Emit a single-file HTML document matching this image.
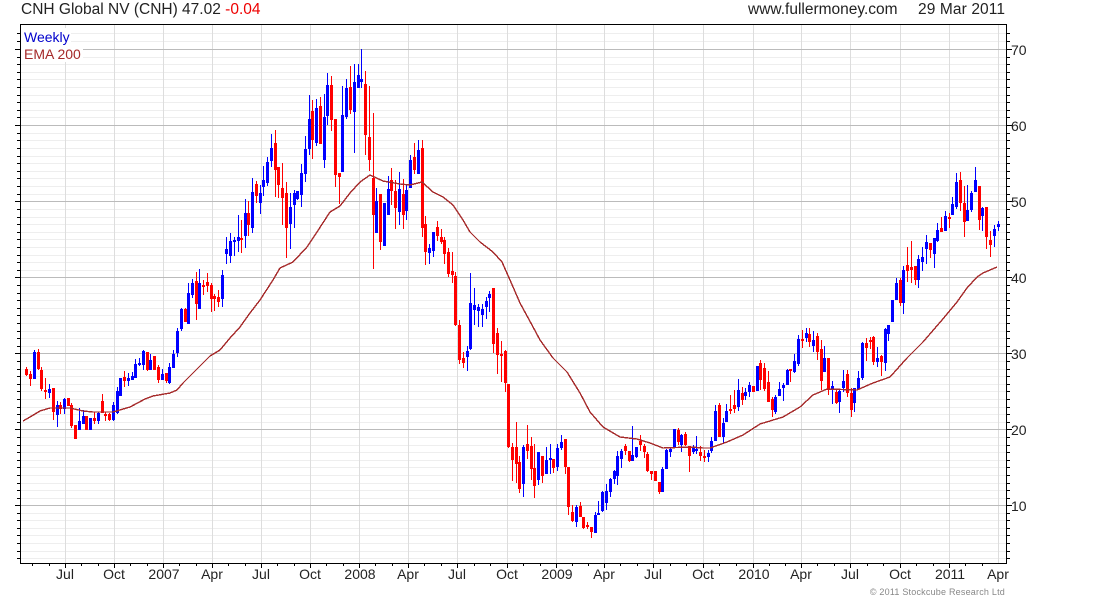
<!DOCTYPE html>
<html><head><meta charset="utf-8"><title>CNH Global NV</title>
<style>
html,body{margin:0;padding:0;background:#fff;width:1100px;height:600px;overflow:hidden}
svg{display:block}
text{font-family:"Liberation Sans",sans-serif;font-size:14px;fill:#222}
.c{shape-rendering:crispEdges;fill:none}
.a text{text-anchor:middle}
</style></head><body>
<svg width="1100" height="600" viewBox="0 0 1100 600" xmlns="http://www.w3.org/2000/svg">
<defs>
<path id="m" d="M0 33.5H1M0 41.5H1M0 57.5H1M0 64.5H1M0 72.5H1M0 79.5H1M0 87.5H1M0 95.5H1M0 102.5H1M0 110.5H1M0 117.5H1M0 133.5H1M0 140.5H1M0 148.5H1M0 156.5H1M0 163.5H1M0 171.5H1M0 178.5H1M0 186.5H1M0 194.5H1M0 209.5H1M0 217.5H1M0 224.5H1M0 232.5H1M0 239.5H1M0 247.5H1M0 255.5H1M0 262.5H1M0 270.5H1M0 285.5H1M0 293.5H1M0 300.5H1M0 308.5H1M0 315.5H1M0 323.5H1M0 331.5H1M0 338.5H1M0 346.5H1M0 361.5H1M0 369.5H1M0 376.5H1M0 384.5H1M0 391.5H1M0 399.5H1M0 407.5H1M0 414.5H1M0 422.5H1M0 437.5H1M0 445.5H1M0 452.5H1M0 460.5H1M0 467.5H1M0 475.5H1M0 483.5H1M0 490.5H1M0 498.5H1M0 513.5H1M0 520.5H1M0 528.5H1M0 535.5H1M0 543.5H1M0 551.5H1M0 558.5H1"/>
<path id="j" d="M0 49.5H1M0 125.5H1M0 201.5H1M0 277.5H1M0 353.5H1M0 429.5H1M0 505.5H1"/>
</defs>
<rect width="1100" height="600" fill="#fff"/>
<g class="c">
<use href="#m" transform="translate(20 0) scale(986 1)" stroke="#eee"/>
<path stroke="#ddd" d="M65.5 24V563M114.5 24V563M163.5 24V563M212.5 24V563M261.5 24V563M310.5 24V563M359.5 24V563M408.5 24V563M457.5 24V563M507.5 24V563M556.5 24V563M604.5 24V563M653.5 24V563M703.5 24V563M753.5 24V563M801.5 24V563M850.5 24V563M900.5 24V563M949.5 24V563M998.5 24V563"/>
<use href="#j" transform="translate(20 0) scale(986 1)" stroke="#bbb"/>
<use href="#m" transform="translate(17 0) scale(3 1)" stroke="#000"/>
<use href="#j" transform="translate(15 0) scale(5 1)" stroke="#000"/>
<use href="#m" transform="translate(1007 0) scale(3 1)" stroke="#000"/>
<use href="#j" transform="translate(1007 0) scale(5 1)" stroke="#000"/>
<path stroke="#000" d="M20.5 24V563.5M20 24.5H1007M1006.5 24V564M20 563.5H1007"/>
<path stroke="#000" d="M32.5 564v2M49.5 564v2M65.5 564v4M81.5 564v2M98.5 564v2M114.5 564v4M130.5 564v2M147.5 564v2M163.5 564v4M179.5 564v2M196.5 564v2M212.5 564v4M228.5 564v2M245.5 564v2M261.5 564v4M277.5 564v2M294.5 564v2M310.5 564v4M326.5 564v2M343.5 564v2M359.5 564v4M375.5 564v2M392.5 564v2M408.5 564v4M424.5 564v2M441.5 564v2M457.5 564v4M474.5 564v2M490.5 564v2M507.5 564v4M523.5 564v2M540.5 564v2M556.5 564v4M572.5 564v2M588.5 564v2M604.5 564v4M620.5 564v2M637.5 564v2M653.5 564v4M670.5 564v2M686.5 564v2M703.5 564v4M719.5 564v2M736.5 564v2M753.5 564v4M769.5 564v2M785.5 564v2M801.5 564v4M817.5 564v2M834.5 564v2M850.5 564v4M867.5 564v2M883.5 564v2M900.5 564v4M916.5 564v2M933.5 564v2M949.5 564v4M965.5 564v2M982.5 564v2"/>
<path stroke="#00f" d="M34.5 350V379M49.5 384V398M57.5 401V427M64.5 398V414M79.5 408V430M83.5 410V424M90.5 418V430M98.5 412V424M113.5 402V421M117.5 387V414M120.5 378V396M128.5 373V386M132.5 372V380M135.5 359V378M139.5 358V366M143.5 350V370M150.5 354V370M162.5 369V380M169.5 363V384M173.5 350V368M177.5 328V357M181.5 308V331M188.5 283V324M192.5 279V298M199.5 269V309M222.5 270V307M226.5 237V264M230.5 233V263M234.5 237V256M238.5 215V252M245.5 199V248M252.5 178V233M260.5 185V214M263.5 166V196M267.5 157V186M271.5 134V167M290.5 193V249M294.5 190V228M297.5 191V200M301.5 164V207M305.5 136V182M309.5 95V155M316.5 99V146M324.5 94V168M327.5 73V125M342.5 86V172M346.5 79V119M354.5 64V153M358.5 64V88M361.5 49V88M376.5 188V233M384.5 203V246M388.5 176V215M399.5 172V225M406.5 185V220M410.5 155V188M418.5 140V174M429.5 244V264M433.5 232V257M467.5 346V371M470.5 273V350M474.5 288V325M478.5 304V327M482.5 304V327M486.5 297V319M489.5 291V312M523.5 445V497M538.5 452V485M546.5 447V474M550.5 444V474M557.5 444V471M561.5 435V450M576.5 505V527M595.5 512V533M598.5 501V515M602.5 491V512M606.5 484V510M610.5 478V497M614.5 470V484M617.5 451V485M621.5 449V468M632.5 426V461M636.5 447V458M662.5 467V492M666.5 449V469M670.5 447V457M674.5 429V447M681.5 434V452M693.5 445V454M696.5 436V454M708.5 450V462M711.5 437V453M715.5 405V441M723.5 418V444M726.5 404V422M738.5 379V411M745.5 388V400M749.5 382V397M757.5 366V391M775.5 395V414M779.5 382V396M783.5 383V401M787.5 369V385M794.5 354V373M798.5 335V366M806.5 328V342M813.5 331V352M824.5 346V372M832.5 381V404M839.5 390V413M843.5 370V392M854.5 388V412M858.5 371V389M862.5 342V380M877.5 347V367M885.5 328V371M888.5 325V341M892.5 300V322M896.5 278V300M903.5 266V314M918.5 255V288M922.5 247V271M926.5 235V264M934.5 238V268M937.5 223V242M945.5 211V231M952.5 197V215M956.5 173V209M967.5 185V221M971.5 191V212M975.5 167V192M982.5 207V231M994.5 225V247M998.5 221V231"/>
<path stroke="#00f" stroke-width="3" d="M34.5 352V379M49.5 389V393M57.5 405V415M64.5 399V409M79.5 421V430M83.5 416V424M90.5 418V430M98.5 413V421M113.5 405V420M117.5 391V413M120.5 378V396M128.5 378V381M132.5 376V380M135.5 364V378M139.5 363V365M143.5 351V365M150.5 360V370M162.5 374V380M169.5 367V383M173.5 354V368M177.5 331V353M181.5 309V329M188.5 293V324M192.5 283V295M199.5 283V309M222.5 275V299M226.5 249V254M230.5 241V256M234.5 240V242M238.5 237V241M245.5 213V236M252.5 192V228M260.5 193V203M263.5 180V187M267.5 162V183M271.5 148V161M290.5 207V224M294.5 193V205M297.5 191V199M301.5 173V195M305.5 149V174M309.5 119V149M316.5 108V143M324.5 117V160M327.5 85V116M342.5 115V172M346.5 88V117M354.5 82V112M358.5 75V88M361.5 79V82M376.5 201V233M384.5 203V246M388.5 189V215M399.5 189V212M406.5 190V211M410.5 160V188M418.5 150V174M429.5 248V253M433.5 232V251M467.5 351V357M470.5 303V349M474.5 305V310M478.5 307V311M482.5 309V315M486.5 301V307M489.5 294V298M523.5 447V484M538.5 452V480M546.5 460V474M550.5 458V460M557.5 448V467M561.5 442V448M576.5 507V522M595.5 515V533M598.5 513V515M602.5 492V511M606.5 491V503M610.5 479V492M614.5 471V479M617.5 456V476M621.5 451V459M632.5 455V461M636.5 447V457M662.5 469V492M666.5 450V469M670.5 449V452M674.5 429V447M681.5 435V445M693.5 448V452M696.5 449V451M708.5 453V457M711.5 441V451M715.5 411V441M723.5 423V437M726.5 411V422M738.5 390V407M745.5 392V396M749.5 385V392M757.5 366V391M775.5 397V412M779.5 389V396M783.5 385V388M787.5 370V385M794.5 361V372M798.5 339V364M806.5 333V338M813.5 340V346M824.5 358V372M832.5 386V389M839.5 391V402M843.5 381V388M854.5 388V403M858.5 378V389M862.5 343V378M877.5 358V362M885.5 329V363M888.5 325V334M892.5 300V322M896.5 283V300M903.5 270V303M918.5 259V280M922.5 257V262M926.5 242V249M934.5 238V254M937.5 230V241M945.5 216V231M952.5 204V215M956.5 182V207M967.5 210V221M971.5 193V210M975.5 180V192M982.5 208V216M994.5 229V236M998.5 224V227"/>
<path stroke="#f00" d="M26.5 367V376M30.5 371V386M38.5 349V370M41.5 367V391M45.5 378V399M53.5 388V420M60.5 402V414M68.5 398V406M71.5 403V428M75.5 425V439M86.5 416V430M94.5 412V424M102.5 394V413M105.5 412V421M109.5 413V421M124.5 371V387M147.5 352V371M154.5 356V370M158.5 365V383M166.5 373V383M185.5 308V322M196.5 272V320M203.5 280V295M207.5 273V292M211.5 283V312M214.5 294V311M218.5 290V307M241.5 220V253M248.5 201V236M256.5 181V203M275.5 130V197M278.5 167V198M282.5 163V225M286.5 182V258M312.5 100V159M320.5 97V144M331.5 76V131M335.5 119V187M339.5 173V204M350.5 66V114M365.5 71V155M369.5 86V171M373.5 113V269M380.5 194V250M391.5 168V205M395.5 180V229M403.5 179V229M414.5 143V174M422.5 140V237M425.5 216V265M437.5 221V241M441.5 229V244M444.5 237V264M448.5 248V277M452.5 252V283M455.5 272V326M459.5 320V364M463.5 352V368M493.5 288V353M497.5 328V374M501.5 341V382M505.5 350V392M508.5 384V448M512.5 443V481M516.5 422V483M519.5 456V493M527.5 425V459M531.5 437V480M534.5 444V498M542.5 456V483M553.5 459V473M565.5 439V474M568.5 467V515M572.5 505V522M580.5 502V517M583.5 517V529M587.5 522V529M591.5 527V538M625.5 444V455M629.5 451V462M640.5 435V451M644.5 444V458M647.5 452V472M651.5 471V480M655.5 471V481M659.5 482V494M678.5 428V445M685.5 432V446M689.5 446V472M700.5 446V461M704.5 450V462M719.5 403V437M730.5 395V414M734.5 390V413M742.5 387V405M753.5 386V392M760.5 360V390M764.5 363V391M768.5 371V402M772.5 397V417M790.5 369V382M802.5 330V348M809.5 328V347M817.5 333V360M821.5 340V390M828.5 358V395M836.5 389V404M847.5 370V397M851.5 388V417M866.5 338V361M870.5 337V349M873.5 336V365M881.5 355V376M900.5 278V306M907.5 247V282M911.5 241V283M915.5 266V285M930.5 243V258M941.5 217V232M949.5 213V228M960.5 172V211M964.5 186V237M979.5 186V230M986.5 207V249M990.5 231V257"/>
<path stroke="#f00" stroke-width="3" d="M26.5 369V375M30.5 374V379M38.5 352V369M41.5 370V389M45.5 390V392M53.5 388V412M60.5 405V409M68.5 398V406M71.5 405V426M75.5 425V439M86.5 416V430M94.5 418V421M102.5 401V413M105.5 414V416M109.5 414V420M124.5 377V381M147.5 352V370M154.5 356V370M158.5 367V380M166.5 373V381M185.5 309V322M196.5 281V304M203.5 285V287M207.5 282V286M211.5 285V299M214.5 296V299M218.5 297V302M241.5 238V240M248.5 213V225M256.5 184V196M275.5 143V170M278.5 167V185M282.5 188V198M286.5 193V228M312.5 111V140M320.5 106V144M331.5 85V120M335.5 119V175M339.5 173V177M350.5 87V110M365.5 84V135M369.5 137V160M373.5 178V215M380.5 194V242M391.5 180V191M395.5 191V208M403.5 194V215M414.5 157V170M422.5 148V228M425.5 224V252M437.5 227V236M441.5 237V242M444.5 240V254M448.5 252V274M452.5 271V275M455.5 276V325M459.5 325V360M463.5 358V363M493.5 288V344M497.5 333V355M501.5 354V356M505.5 351V383M508.5 384V447M512.5 447V460M516.5 447V464M519.5 462V489M527.5 444V451M531.5 446V469M534.5 468V486M542.5 456V476M553.5 459V468M565.5 439V467M568.5 467V507M572.5 512V521M580.5 506V517M583.5 517V528M587.5 525V527M591.5 527V532M625.5 446V451M629.5 451V461M640.5 441V445M644.5 446V452M647.5 454V471M651.5 471V474M655.5 471V481M659.5 482V492M678.5 430V442M685.5 434V445M689.5 446V456M700.5 452V456M704.5 456V458M719.5 405V437M730.5 409V411M734.5 405V409M742.5 393V400M753.5 386V392M760.5 363V380M764.5 368V389M768.5 382V402M772.5 399V410M790.5 369V371M802.5 339V341M809.5 334V342M817.5 336V352M821.5 349V381M828.5 358V390M836.5 392V403M847.5 374V393M851.5 393V410M866.5 343V348M870.5 340V342M873.5 337V362M881.5 356V362M900.5 280V303M907.5 265V271M911.5 267V270M915.5 266V280M930.5 243V250M941.5 228V232M949.5 217V219M960.5 180V203M964.5 203V222M979.5 186V220M986.5 207V237M990.5 240V245"/>
</g>
<polyline fill="none" stroke="#a52a2a" stroke-width="1.4" shape-rendering="crispEdges" points="23,421 30,417 40,411 50,408 70,408 83,411 93,412 113,412 130,407 145,399 153,396 170,393 177,390 183,383 197,369 210,356 220,350 230,338 240,327 250,313 260,300 273,280 280,268 293,262 307,247 317,232 330,212 340,206 350,193 360,182 370,175 383,181 400,184 410,185 422,182 433,192 443,197 453,205 463,220 470,232 480,242 493,252 502,262 510,280 520,303 532,325 540,340 553,358 567,372 580,393 590,412 603,427 620,437 637,439 650,443 663,448 690,447 703,448 710,448 727,442 743,435 760,424 783,417 800,407 813,395 827,389 857,390 873,383 890,377 907,358 923,342 942,320 957,302 967,288 977,277 983,273 997,267"/>
<rect x="21" y="28" width="50" height="17" fill="#fff"/>
<rect x="21" y="45" width="62" height="17" fill="#fff"/>
<text x="24" y="42" style="fill:#00c">Weekly</text>
<text x="24" y="59" style="fill:#a52a2a">EMA 200</text>
<text x="21" y="14" style="font-size:15.5px">CNH Global NV (CNH) 47.02 <tspan style="fill:#e00">-0.04</tspan></text>
<text x="748" y="14" style="font-size:15.5px">www.fullermoney.com</text>
<text x="918" y="14" style="font-size:15.5px" textLength="87" lengthAdjust="spacing">29 Mar 2011</text>
<text x="1011" y="55">70</text><text x="1011" y="131">60</text><text x="1011" y="207">50</text><text x="1011" y="283">40</text><text x="1011" y="359">30</text><text x="1011" y="435">20</text><text x="1011" y="511">10</text>
<g class="a">
<text x="65" y="579">Jul</text><text x="114" y="579">Oct</text><text x="164" y="579">2007</text><text x="212" y="579">Apr</text><text x="261" y="579">Jul</text><text x="310" y="579">Oct</text><text x="360" y="579">2008</text><text x="408" y="579">Apr</text><text x="457" y="579">Jul</text><text x="507" y="579">Oct</text><text x="557" y="579">2009</text><text x="604" y="579">Apr</text><text x="653" y="579">Jul</text><text x="703" y="579">Oct</text><text x="754" y="579">2010</text><text x="801" y="579">Apr</text><text x="850" y="579">Jul</text><text x="900" y="579">Oct</text><text x="950" y="579">2011</text><text x="998" y="579">Apr</text>
</g>
<text x="1005" y="595" style="font-size:9px;fill:#888;text-anchor:end;letter-spacing:.21px">© 2011 Stockcube Research Ltd</text>
</svg>
</body></html>
